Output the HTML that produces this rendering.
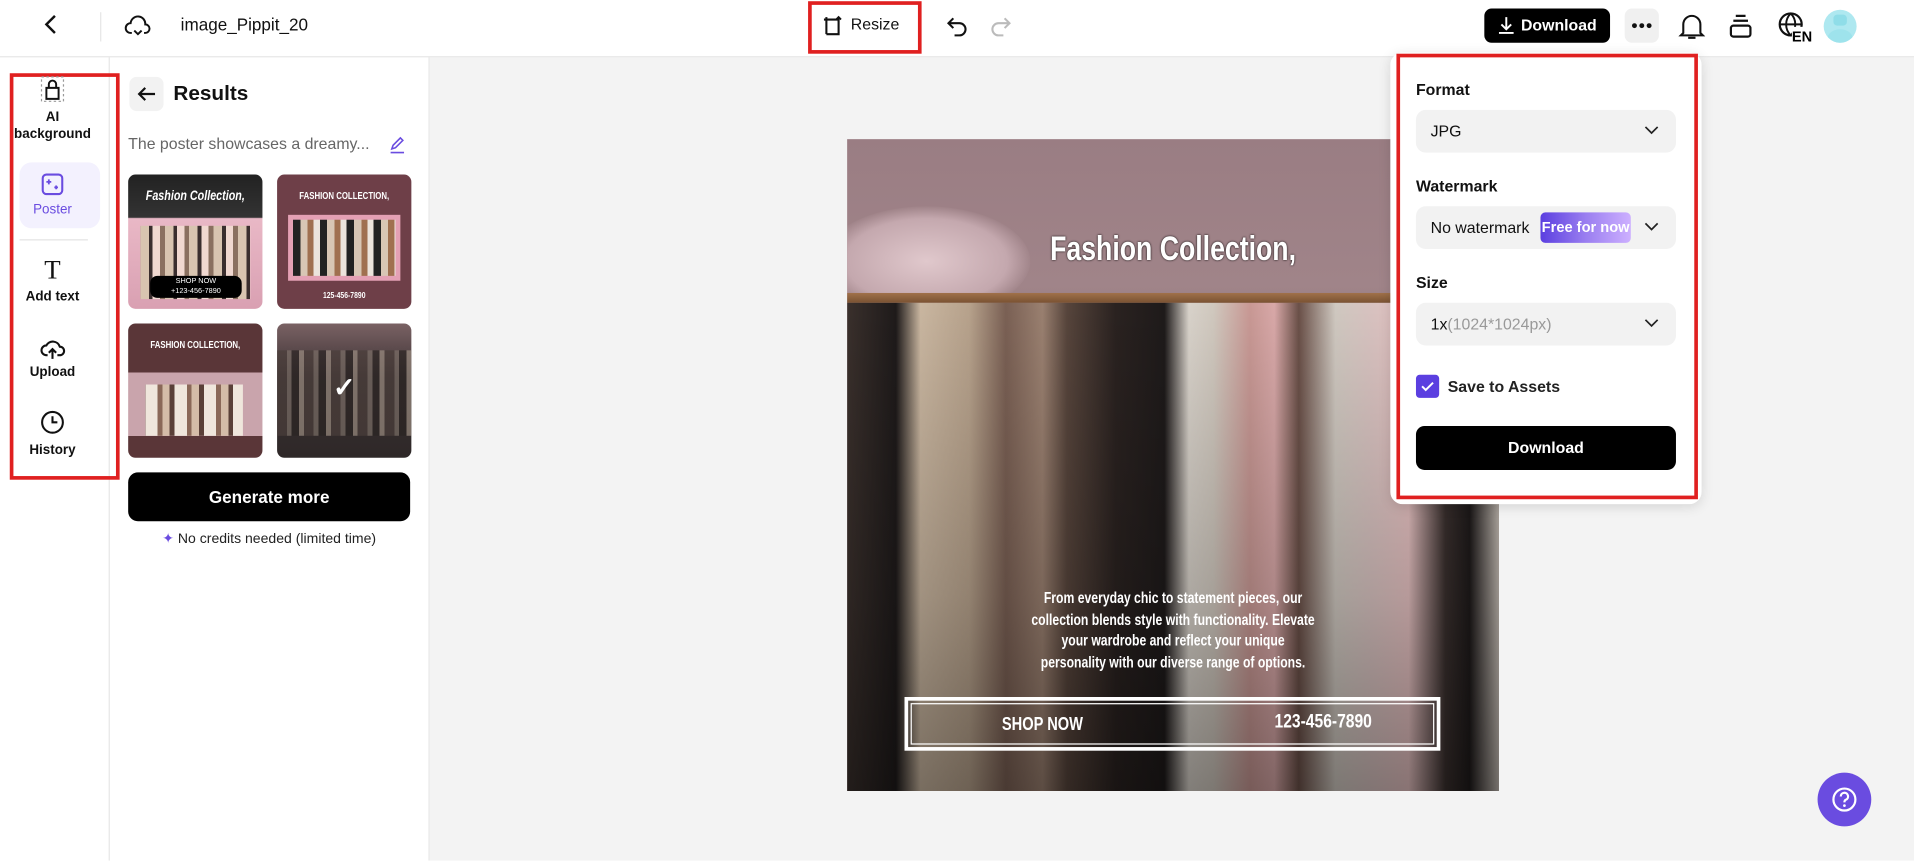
<!DOCTYPE html>
<html><head><meta charset="utf-8"><style>
*{box-sizing:border-box;margin:0;padding:0}
html,body{width:1914px;height:861px;overflow:hidden;background:#fff;font-family:"Liberation Sans",sans-serif;color:#111}
#w{position:absolute;left:0;top:0;width:1568px;height:705px;transform:scale(1.22066);transform-origin:0 0}
.a{position:absolute}
.nav{font-size:11px;font-weight:bold;text-align:center;width:86px;left:0}
.lbl{font-size:13px;font-weight:bold;left:1160px}
.sel{left:1160px;width:213px;height:35px;background:#f2f2f2;border-radius:8px;font-size:13px;line-height:35px;padding-left:12px}
.chev{position:absolute;right:14px;top:13px}
.cond{font-family:"Liberation Sans Narrow","Liberation Sans",sans-serif;font-weight:bold;color:#fff}
.th{border-radius:6px;overflow:hidden;width:110px;height:110px}
.sx{transform:scaleX(.8);transform-origin:50% 50%;white-space:nowrap}
</style></head><body><div id="w">
<!-- header -->
<div class="a" style="left:0;top:46px;width:1568px;height:1px;background:#e6e6e6"></div>
<svg class="a" style="left:34px;top:11px" width="16" height="18" viewBox="0 0 16 18"><path d="M11 2 4 9l7 7" fill="none" stroke="#111" stroke-width="2"/></svg>
<div class="a" style="left:82px;top:10px;width:1px;height:24px;background:#e6e6e6"></div>
<svg class="a" style="left:102px;top:10px" width="22" height="22" viewBox="0 0 22 22"><path d="M6 17H5a4 4 0 0 1 0-8 6 6 0 0 1 12 1 3.5 3.5 0 0 1 0 7h-1" fill="none" stroke="#111" stroke-width="1.6"/><path d="M8 15l3 3 3-3" fill="none" stroke="#111" stroke-width="1.6"/></svg>
<div class="a" style="left:148px;top:12px;font-size:14px">image_Pippit_20</div>
<div class="a" style="left:662px;top:1px;width:93px;height:43px;border:3px solid #e02020"></div>
<svg class="a" style="left:672px;top:11px" width="20" height="20" viewBox="0 0 20 20"><path d="M5 3v14M3 5h12v12H5" fill="none" stroke="#111" stroke-width="1.7"/><path d="M15 3v4M13 5l2-2 2 2" fill="none" stroke="#111" stroke-width="1.5"/></svg>
<div class="a" style="left:697px;top:12px;font-size:13px">Resize</div>
<svg class="a" style="left:774px;top:11px" width="20" height="20" viewBox="0 0 20 20"><path d="M7 4 3 8l4 4M3 8h9a5 5 0 0 1 0 10H8" fill="none" stroke="#111" stroke-width="1.7"/></svg>
<svg class="a" style="left:810px;top:11px" width="20" height="20" viewBox="0 0 20 20"><path d="M13 4l4 4-4 4M17 8H8a5 5 0 0 0 0 10h4" fill="none" stroke="#bbb" stroke-width="1.7"/></svg>
<div class="a" style="left:1216px;top:7px;width:103px;height:28px;background:#000;border-radius:6px;color:#fff;font-size:13px;font-weight:bold;line-height:28px;padding-left:30px">Download</div>
<svg class="a" style="left:1227px;top:13px" width="14" height="16" viewBox="0 0 14 16"><path d="M7 1v10M3 7l4 4 4-4M1 14h12" fill="none" stroke="#fff" stroke-width="1.6"/></svg>
<div class="a" style="left:1331px;top:7px;width:28px;height:28px;background:#f0f0f0;border-radius:6px"></div>
<svg class="a" style="left:1335px;top:18px" width="20" height="6" viewBox="0 0 20 6"><circle cx="4" cy="3" r="2" fill="#111"/><circle cx="10" cy="3" r="2" fill="#111"/><circle cx="16" cy="3" r="2" fill="#111"/></svg>
<svg class="a" style="left:1375px;top:10px" width="22" height="24" viewBox="0 0 22 24"><path d="M4 17V10a7 7 0 0 1 14 0v7l2 2H2zM8 21h6" fill="none" stroke="#111" stroke-width="1.7"/></svg>
<svg class="a" style="left:1416px;top:11px" width="20" height="22" viewBox="0 0 20 22"><rect x="2" y="10" width="16" height="9" rx="2" fill="none" stroke="#111" stroke-width="1.8"/><path d="M4 6h12M6 2h8" stroke="#111" stroke-width="1.8"/></svg>
<svg class="a" style="left:1456px;top:9px" width="28" height="26" viewBox="0 0 28 26"><circle cx="11" cy="11" r="9" fill="none" stroke="#111" stroke-width="1.8"/><path d="M2 11h18M11 2c-5 5-5 13 0 18M11 2c5 5 5 13 0 18" fill="none" stroke="#111" stroke-width="1.6"/><rect x="12" y="13" width="16" height="13" fill="#fff"/><text x="12" y="25" font-size="12" font-weight="bold" font-family="Liberation Sans">EN</text></svg>
<div class="a" style="left:1494px;top:8px;width:27px;height:27px;border-radius:50%;background:#aee8f0;overflow:hidden"><div class="a" style="left:8px;top:4px;width:11px;height:9px;background:#8fdde8;border-radius:3px"></div><div class="a" style="left:3px;top:16px;width:21px;height:16px;background:#9ee3ec;border-radius:50%"></div></div>
<!-- left nav -->
<div class="a" style="left:89px;top:47px;width:1px;height:658px;background:#e6e6e6"></div>
<div class="a" style="left:8px;top:60px;width:90px;height:333px;border:3px solid #e02020"></div>
<svg class="a" style="left:33px;top:62px" width="20" height="22" viewBox="0 0 20 22"><rect x="1" y="1" width="18" height="20" fill="none" stroke="#999" stroke-dasharray="2 2"/><path d="M5 19V10h10v9zM7 10V7a3 3 0 0 1 6 0v3" fill="none" stroke="#111" stroke-width="1.6"/></svg>
<div class="a nav" style="top:89px;line-height:14px">AI<br>background</div>
<div class="a" style="left:16px;top:133px;width:66px;height:54px;background:#f3f1fe;border-radius:10px"></div>
<svg class="a" style="left:33px;top:141px" width="20" height="20" viewBox="0 0 20 20"><rect x="2" y="2" width="16" height="16" rx="3" fill="none" stroke="#6a4ce0" stroke-width="1.7"/><path d="M7 6v4M5 8h4M13 11v3M11.5 12.5h3" stroke="#6a4ce0" stroke-width="1.5"/></svg>
<div class="a nav" style="top:166px;color:#6a4ce0;font-weight:normal">Poster</div>
<div class="a" style="left:16px;top:196px;width:56px;height:1px;background:#e3e3e3"></div>
<div class="a nav" style="top:208px;font-size:22px;font-weight:normal;font-family:'Liberation Serif',serif;line-height:26px">T</div>
<div class="a nav" style="top:237px">Add text</div>
<svg class="a" style="left:32px;top:274px" width="22" height="22" viewBox="0 0 22 22"><path d="M7 17H6a4 4 0 0 1 0-8 6 6 0 0 1 11 1 3.5 3.5 0 0 1 0 7h-2" fill="none" stroke="#111" stroke-width="1.7"/><path d="M11 20v-8M8 15l3-3 3 3" fill="none" stroke="#111" stroke-width="1.7"/></svg>
<div class="a nav" style="top:299px">Upload</div>
<svg class="a" style="left:33px;top:336px" width="20" height="20" viewBox="0 0 20 20"><circle cx="10" cy="10" r="8.5" fill="none" stroke="#111" stroke-width="1.7"/><path d="M10 5v5h4" fill="none" stroke="#111" stroke-width="1.7"/></svg>
<div class="a nav" style="top:363px">History</div>
<!-- panel -->
<div class="a" style="left:351px;top:47px;width:1px;height:658px;background:#e6e6e6"></div>
<div class="a" style="left:352px;top:47px;width:1216px;height:658px;background:#f3f3f3"></div>
<div class="a" style="left:106px;top:63px;width:28px;height:28px;background:#f2f2f2;border-radius:6px"></div>
<svg class="a" style="left:111px;top:68px" width="18" height="18" viewBox="0 0 18 18"><path d="M16 9H3M8 4 3 9l5 5" fill="none" stroke="#111" stroke-width="1.8"/></svg>
<div class="a" style="left:142px;top:67px;font-size:17px;font-weight:bold">Results</div>
<div class="a" style="left:105px;top:110px;font-size:13px;color:#666">The poster showcases a dreamy...</div>
<svg class="a" style="left:318px;top:111px" width="15" height="15" viewBox="0 0 15 15"><path d="M3 11l1-3 6-6 2 2-6 6zM2 14h11" fill="none" stroke="#6a4ce0" stroke-width="1.3"/></svg>
<div class="a th" style="left:105px;top:143px;background:linear-gradient(#222 0,#333 35px,#e9b8c6 36px,#d9a0b2 110px)">
 <div class="a" style="left:10px;top:42px;width:90px;height:60px;background:repeating-linear-gradient(90deg,#d8c4b0 0 7px,#3a2e2e 7px 10px,#f0d8d0 10px 16px,#8a7060 16px 20px)"></div>
 <div class="a cond sx" style="left:0;width:110px;top:12px;text-align:center;font-size:11px;font-style:italic">Fashion Collection,</div>
 <div class="a" style="left:18px;top:83px;width:75px;height:18px;background:#000;border-radius:6px;color:#fff;font-size:6px;text-align:center;line-height:8px;padding-top:1px">SHOP NOW<br>+123-456-7890</div></div>
<div class="a th" style="left:227px;top:143px;background:#6e3f48">
 <div class="a cond sx" style="left:0;width:110px;top:13px;text-align:center;font-size:8px">FASHION COLLECTION,</div>
 <div class="a" style="left:9px;top:33px;width:92px;height:54px;background:#e4a0b4;padding:4px"><div style="width:84px;height:46px;background:repeating-linear-gradient(90deg,#222 0 6px,#d8c6b4 6px 12px,#a07050 12px 17px,#ece4dc 17px 22px)"></div></div>
 <div class="a cond sx" style="left:0;width:110px;top:96px;text-align:center;font-size:7px">125-456-7890</div></div>
<div class="a th" style="left:105px;top:265px;background:linear-gradient(#5a3638 0,#5a3638 40px,#c9a4ac 40px,#c9a4ac 92px,#5a3638 92px)">
 <div class="a cond sx" style="left:0;width:110px;top:13px;text-align:center;font-size:8px">FASHION COLLECTION,</div>
 <div class="a" style="left:14px;top:50px;width:80px;height:42px;background:repeating-linear-gradient(90deg,#efe6dc 0 10px,#8a6858 10px 14px,#d4bca8 14px 20px,#5a4038 20px 24px)"></div></div>
<div class="a th" style="left:227px;top:265px;background:linear-gradient(#7a6264,#3a3032 40%,#2e2828)">
 <div class="a" style="left:0;top:22px;width:110px;height:70px;background:repeating-linear-gradient(90deg,#4a3e3a 0 8px,#7a6e66 8px 12px,#2a2422 12px 18px,#9a8c80 18px 22px);opacity:.7"></div>
 <div class="a" style="left:0;width:110px;top:40px;text-align:center;color:#fff;font-size:22px;font-weight:bold">✓</div></div>
<div class="a" style="left:105px;top:387px;width:231px;height:40px;background:#000;border-radius:8px;color:#fff;font-size:14px;font-weight:bold;text-align:center;line-height:40px">Generate more</div>
<div class="a" style="left:105px;top:434px;width:231px;text-align:center;font-size:11.5px;color:#222"><span style="color:#6a4ce0">✦</span> No credits needed (limited time)</div>
<!-- poster -->
<div class="a" style="left:694px;top:114px;width:534px;height:534px;overflow:hidden;background:linear-gradient(#9a7d83,#a08489 120px,#8a7276 200px)">
 <div class="a" style="left:-20px;top:55px;width:170px;height:90px;border-radius:50%;background:radial-gradient(ellipse,#e0c8cc,#c4a8ae 55%,rgba(160,132,137,0) 72%)"></div>
 <div class="a" style="left:0;top:134px;width:534px;height:400px;background:linear-gradient(90deg,#3a302c 0,#1e1a1a 40px,#c9b6a0 60px,#b7a28c 100px,#7a6054 130px,#9a8070 160px,#57453c 180px,#2a2220 220px,#1e1a1a 260px,#d8d2ca 280px,#d0c8be 300px,#c89894 330px,#d8a8a8 350px,#6a5048 370px,#cfc8c0 400px,#d8c2c0 430px,#e4c0c0 460px,#3a302e 490px,#1e1a1a 510px,#c0b8b0 534px)"></div>
 <div class="a" style="left:0;top:134px;width:534px;height:400px;background:linear-gradient(rgba(0,0,0,0),rgba(0,0,0,.2) 60%,rgba(0,0,0,.4))"></div>
 <div class="a" style="left:0;top:126px;width:534px;height:8px;background:linear-gradient(#a0714a,#7a5232)"></div>
 <div class="a cond sx" style="left:0;width:534px;top:74px;text-align:center;font-size:28px;transform:scaleX(.78);text-shadow:0 0 2px #000">Fashion Collection,</div>
 <div class="a cond sx" style="left:0;width:534px;top:368px;text-align:center;font-size:12.5px;line-height:17.5px;transform:scaleX(.8)">From everyday chic to statement pieces, our<br>collection blends style with functionality. Elevate<br>your wardrobe and reflect your unique<br>personality with our diverse range of options.</div>
 <div class="a" style="left:47px;top:457px;width:439px;height:44px;border:3px solid #fff;outline:1px solid #fff;outline-offset:-6px"></div>
 <div class="a cond sx" style="left:110px;width:100px;text-align:center;top:471px;font-size:15px">SHOP NOW</div>
 <div class="a cond sx" style="left:335px;width:110px;text-align:center;top:469px;font-size:16px">123-456-7890</div>
</div>
<!-- popup -->
<div class="a" style="left:1139px;top:43px;width:255px;height:370px;background:#fff;border-radius:10px;box-shadow:0 2px 10px rgba(0,0,0,.12)"></div>
<div class="a" style="left:1144px;top:44px;width:247px;height:365px;border:3px solid #e02020"></div>
<div class="a lbl" style="top:66px">Format</div>
<div class="a sel" style="top:90px">JPG<svg class="chev" width="12" height="8" viewBox="0 0 12 8"><path d="M1 1l5 5 5-5" fill="none" stroke="#222" stroke-width="1.4"/></svg></div>
<div class="a lbl" style="top:145px">Watermark</div>
<div class="a sel" style="top:169px">No watermark<span class="a" style="left:102px;top:5px;width:74px;height:25px;border-radius:4px;background:linear-gradient(90deg,#5b3fe0,#9a7ef0,#cdb0ff);color:#fff;font-weight:bold;font-size:12px;line-height:25px;text-align:center">Free for now</span><svg class="chev" width="12" height="8" viewBox="0 0 12 8"><path d="M1 1l5 5 5-5" fill="none" stroke="#222" stroke-width="1.4"/></svg></div>
<div class="a lbl" style="top:224px">Size</div>
<div class="a sel" style="top:248px">1x<span style="color:#999">(1024*1024px)</span><svg class="chev" width="12" height="8" viewBox="0 0 12 8"><path d="M1 1l5 5 5-5" fill="none" stroke="#222" stroke-width="1.4"/></svg></div>
<div class="a" style="left:1160px;top:307px;width:19px;height:19px;background:#5b3fe0;border-radius:3px"></div>
<svg class="a" style="left:1163px;top:310px" width="13" height="13" viewBox="0 0 13 13"><path d="M2 6.5l3 3 6-6" fill="none" stroke="#fff" stroke-width="1.6"/></svg>
<div class="a" style="left:1186px;top:309px;font-size:13px;font-weight:bold;color:#222">Save to Assets</div>
<div class="a" style="left:1160px;top:349px;width:213px;height:36px;background:#000;border-radius:7px;color:#fff;font-size:13px;font-weight:bold;text-align:center;line-height:36px">Download</div>
<!-- help -->
<div class="a" style="left:1489px;top:633px;width:44px;height:44px;border-radius:50%;background:#6a4ce0"></div>
<svg class="a" style="left:1500px;top:644px" width="22" height="22" viewBox="0 0 22 22"><circle cx="11" cy="11" r="9" fill="none" stroke="#fff" stroke-width="1.8"/><path d="M8 8.5a3 3 0 1 1 4 2.8c-.8.4-1 1-1 2" fill="none" stroke="#fff" stroke-width="1.8"/><circle cx="11" cy="16" r="1.1" fill="#fff"/></svg>
</div></body></html>
